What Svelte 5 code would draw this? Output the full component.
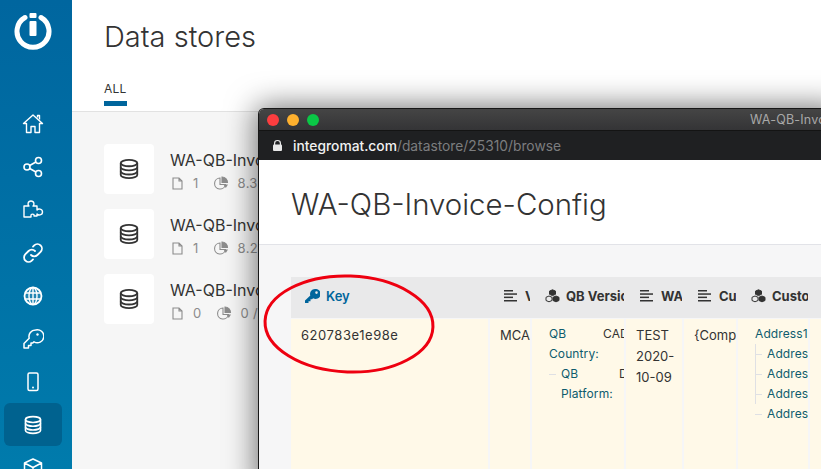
<script>
  const stores = [
    { name: 'WA-QB-Invoice-Config', records: 1, size: '8.3 KB / 1 MB' },
    { name: 'WA-QB-Invoice-Log', records: 1, size: '8.2 KB / 1 MB' },
    { name: 'WA-QB-Invoice-Test', records: 0, size: '0 / 1 MB' },
  ];

  const columns = [
    { label: 'V', icon: 'text' },
    { label: 'QB Version', icon: 'group' },
    { label: 'WA', icon: 'text' },
    { label: 'Cu', icon: 'text' },
    { label: 'Custom', icon: 'group' },
  ];

  const addressLines = ['Address2:', 'Address3:', 'Address4:', 'Address5:'];
</script>

{#snippet dbIcon(size)}
  <svg width={size} height={size} viewBox="0 0 24 24" fill="none" stroke="currentColor" stroke-width="2">
    <ellipse cx="12" cy="5.5" rx="9" ry="3.5" />
    <path d="M3 5.500v13c0 1.900 4 3.500 9 3.500s9-1.600 9-3.500v-13" />
    <path d="M3 10c0 1.900 4 3.500 9 3.500s9-1.600 9-3.500" />
    <path d="M3 14.500c0 1.900 4 3.500 9 3.500s9-1.600 9-3.500" />
  </svg>
{/snippet}

{#snippet fileIcon()}
  <svg width="11" height="13" viewBox="0 0 11 13" fill="none" stroke="#8c8c8c" stroke-width="1.100">
    <path d="M1 1h6l3 3v8H1zM7 1v3h3" />
  </svg>
{/snippet}

{#snippet pieIcon()}
  <svg width="15" height="14" viewBox="0 0 15 14" fill="none" stroke="#8c8c8c" stroke-width="1.100">
    <path d="M6 2a5.500 5.500 0 1 0 5.500 6.500H6z" />
    <path d="M8 1a5.500 5.500 0 0 1 5.500 5.500H8z" fill="#8c8c8c" />
    <path d="M9.500 8.500h4.500l-2.200 3.500z" fill="#8c8c8c" stroke="none" />
  </svg>
{/snippet}

{#snippet textIcon()}
  <svg class="col-icon" width="13" height="12" viewBox="0 0 13 12" fill="#333">
    <rect width="9" height="1.500" y="0" />
    <rect width="13" height="1.500" y="3.300" />
    <rect width="9" height="1.500" y="6.600" />
    <rect width="13" height="1.500" y="10" />
  </svg>
{/snippet}

{#snippet groupIcon()}
  <svg class="col-icon cubes" width="15" height="14" viewBox="0 0 15 14" fill="#333" stroke="#333" stroke-width="1">
    <path d="M7.500 0.800l3 1.300v3.200l-3 1.300-3-1.300V2.100z" />
    <path d="M4 7l3 1.300v3.200L4 12.800 1 11.500V8.300z" fill="#e9e9ea" />
    <path d="M11 7l3 1.300v3.200L11 12.800 8 11.500V8.300z" />
  </svg>
{/snippet}

<div class="page">
  <nav class="sidebar">
    <svg class="logo" width="38" height="38" viewBox="0 0 38 38" fill="none">
      <path d="M11 5.500a16 16 0 1 0 16 0" stroke="#fff" stroke-width="5" stroke-linecap="round" />
      <rect x="15.500" y="1" width="7" height="5" rx="1" fill="#fff" />
      <rect x="15.500" y="9" width="7" height="15" rx="1" fill="#fff" />
    </svg>

    <ul class="menu">
      <li>
        <svg width="22" height="22" viewBox="0 0 22 22" fill="none" stroke="#fff" stroke-width="1.400" stroke-linejoin="round">
          <path d="M1.500 10.500L11 2l9.500 8.500h-3v9h-4.500v-6H9v6H4.500v-9z" />
          <path d="M15.500 4.500v-2h2v4" />
        </svg>
      </li>
      <li>
        <svg width="22" height="22" viewBox="0 0 22 22" fill="none" stroke="#fff" stroke-width="1.600">
          <circle cx="5" cy="11" r="3" />
          <circle cx="16.500" cy="4.500" r="3" />
          <circle cx="16.500" cy="17.500" r="3" />
          <path d="M7.700 9.500l6.200-3.500M7.700 12.500l6.200 3.500" />
        </svg>
      </li>
      <li>
        <svg width="22" height="22" viewBox="0 0 22 22" fill="none" stroke="#fff" stroke-width="1.400" stroke-linejoin="round">
          <path d="M2 7h5c-1.500-1-1.500-5 2-5s3.500 4 2 5h4v4c1-1.500 5.500-1.500 5.500 2s-4.500 3.500-5.500 2v2h-3c.8-2.500-3.500-2.500-3 0v1H2z" />
        </svg>
      </li>
      <li>
        <svg width="22" height="22" viewBox="0 0 22 22" fill="none" stroke="#fff" stroke-width="1.800" stroke-linecap="round">
          <path d="M9 13a4.500 4.500 0 0 0 6.400 0l3.200-3.200a4.500 4.500 0 0 0-6.400-6.400L11 4.600" />
          <path d="M13 9a4.500 4.500 0 0 0-6.400 0l-3.200 3.200a4.500 4.500 0 0 0 6.400 6.400l1.200-1.200" />
        </svg>
      </li>
      <li>
        <svg width="22" height="22" viewBox="0 0 22 22" fill="none" stroke="#fff" stroke-width="1.400">
          <circle cx="11" cy="11" r="8.500" fill="#ffffff22" stroke-width="1.800" />
          <ellipse cx="11" cy="11" rx="4" ry="8.500" />
          <path d="M3 8h16M3 14h16M11 2.500v17" />
        </svg>
      </li>
      <li>
        <svg width="22" height="22" viewBox="0 0 22 22" fill="none" stroke="#fff" stroke-width="1.500" stroke-linejoin="round">
          <path d="M13.500 2a6.500 6.500 0 0 0-6.300 8.200L2 15.500V20h4.500v-2.500H9v-2.500h1.800l1.200-1.200A6.500 6.500 0 1 0 13.500 2z" />
          <circle cx="15.500" cy="6.500" r="1.200" fill="#fff" stroke="none" />
        </svg>
      </li>
      <li>
        <svg width="22" height="22" viewBox="0 0 22 22" fill="none" stroke="#fff" stroke-width="1.500">
          <rect x="6" y="2" width="10" height="17.500" rx="1.500" />
          <circle cx="11" cy="16.500" r="1" fill="#fff" stroke="none" />
        </svg>
      </li>
      <li class="active">{@render dbIcon(20)}</li>
      <li>
        <svg width="22" height="22" viewBox="0 0 22 22" fill="none" stroke="#fff" stroke-width="1.500" stroke-linejoin="round">
          <path d="M11 2l8.500 4v10L11 20.500 2.500 16V6zM2.500 6L11 10.500 19.500 6M11 10.500v10" />
        </svg>
      </li>
    </ul>
  </nav>

  <main class="main">
    <header class="head">
      <h1>Data stores</h1>
      <div class="tab">ALL</div>
    </header>

    <div class="list">
      {#each stores as store}
        <div class="store">
          <div class="tile">{@render dbIcon(22)}</div>
          <div class="info">
            <div class="name">{store.name}</div>
            <div class="meta">
              {@render fileIcon()}
              <span class="count">{store.records}</span>
              {@render pieIcon()}
              <span class="size">{store.size}</span>
            </div>
          </div>
        </div>
      {/each}
    </div>
  </main>

  <section class="window">
    <div class="titlebar">
      <i class="light red"></i>
      <i class="light yellow"></i>
      <i class="light green"></i>
      <span class="win-title">WA-QB-Invoice-Config</span>
    </div>
    <div class="urlbar">
      <svg width="9" height="11" viewBox="0 0 9 11" fill="#e8e8e8">
        <path d="M1 5V3.300a3.500 3.300 0 0 1 7 0V5h-1.200V3.300a2.300 2.200 0 0 0-4.600 0V5z" />
        <rect y="4.500" width="9" height="6.500" rx="1" />
      </svg>
      <span class="url"><b>integromat.com</b>/datastore/25310/browse</span>
    </div>

    <div class="doc-title">
      <h2>WA-QB-Invoice-Config</h2>
    </div>

    <div class="doc-body">
      <div class="table">
        <div class="th key-head">
          <svg class="col-icon" width="15" height="14" viewBox="0 0 15 14" fill="#00659c">
            <path d="M10 0a5 5 0 0 0-4.700 6.600L0 11.500V14h3.500v-1.700h2v-2h1.600l1-1A5 5 0 1 0 10 0zm1.500 2.300a1.300 1.300 0 1 1 0 2.600 1.300 1.300 0 0 1 0-2.600z" />
          </svg>
          Key
        </div>
        {#each columns as col}
          <div class="th">
            {#if col.icon === 'text'}
              {@render textIcon()}
            {:else}
              {@render groupIcon()}
            {/if}
            <span class="th-label">{col.label}</span>
          </div>
        {/each}
        <div class="th"></div>

        <div class="td key-cell">620783e1e98e</div>
        <div class="td plain">MCA</div>
        <div class="td nested">
          <div class="pair">
            <span class="field">QB Country:</span><span class="val">CAD</span>
          </div>
          <div class="pair sub">
            <span class="dash"></span><span class="field">QB Platform:</span><span class="val">D</span>
          </div>
        </div>
        <div class="td plain wrap">TEST 2020-10-09</div>
        <div class="td plain">{'{Comp'}</div>
        <div class="td nested">
          <div class="field line">Address1:</div>
          <div class="tree">
            {#each addressLines as line}
              <div class="leaf"><span class="dash"></span><span class="field">{line}</span></div>
            {/each}
          </div>
        </div>
        <div class="td"></div>
      </div>
    </div>
  </section>

  <svg class="circle" width="190" height="110" viewBox="0 0 190 110" fill="none">
    <ellipse cx="95" cy="54" rx="84" ry="48" stroke="#ee0010" stroke-width="3" transform="rotate(2 95 54)" />
  </svg>
</div>

<style>
  :global(body) {
    margin: 0;
    overflow: hidden;
  }
  .page {
    position: relative;
    display: flex;
    width: 821px;
    height: 469px;
    overflow: hidden;
    font-family: Inter, "Liberation Sans", sans-serif;
    color: #333;
    background: #f6f6f6;
  }
  .sidebar {
    flex: 0 0 66px;
    padding-right: 6px;
    background: linear-gradient(180deg, #00669f, #007bac);
    display: flex;
    flex-direction: column;
    align-items: center;
    color: #fff;
  }
  .logo {
    margin-top: 12px;
    flex-shrink: 0;
  }
  .menu {
    list-style: none;
    margin: 52px 0 0;
    padding: 0;
    display: flex;
    flex-direction: column;
    align-items: center;
  }
  .menu li {
    width: 58px;
    height: 43px;
    display: flex;
    align-items: center;
    justify-content: center;
    border-radius: 6px;
    flex-shrink: 0;
  }
  .menu li.active {
    background: #00628f;
  }
  .main {
    flex: 1;
    min-width: 0;
  }
  .head {
    height: 111px;
    background: #fff;
    border-bottom: 1px solid #e2e2e2;
    padding-left: 32px;
    display: flex;
    flex-direction: column;
  }
  h1 {
    margin: 18px 0 0;
    font-size: 29px;
    line-height: 38px;
    font-weight: 300;
  }
  .tab {
    margin-top: 25px;
    width: 23px;
    height: 25px;
    font-size: 12px;
    line-height: 16px;
    letter-spacing: 0.2px;
    border-bottom: 5px solid #00659c;
    box-sizing: border-box;
  }
  .list {
    padding: 32px 0 0 32px;
    display: flex;
    flex-direction: column;
    gap: 15px;
  }
  .store {
    display: flex;
    gap: 16px;
  }
  .tile {
    width: 50px;
    height: 50px;
    background: #fff;
    border-radius: 4px;
    display: flex;
    align-items: center;
    justify-content: center;
    color: #333;
  }
  .info {
    padding-top: 6px;
    white-space: nowrap;
  }
  .name {
    font-size: 16px;
    line-height: 20px;
  }
  .meta {
    margin: 5px 0 0 2px;
    display: flex;
    align-items: center;
    font-size: 13px;
    line-height: 16px;
    letter-spacing: 0.3px;
    color: #8c8c8c;
  }
  .count {
    margin: 0 15px 0 10px;
  }
  .size {
    margin-left: 9px;
  }
  .window {
    position: absolute;
    left: 259px;
    top: 109px;
    width: 580px;
    height: 380px;
    background: #f6f6f7;
    border-radius: 5px 0 0 0;
    box-shadow: 0 0 30px 3px rgba(0, 0, 0, 0.55), 0 0 0 1px #222;
    overflow: hidden;
  }
  .titlebar {
    height: 21px;
    background: linear-gradient(180deg, #454545, #343436);
    border-bottom: 1px solid #141414;
    display: flex;
    align-items: center;
    padding-left: 8px;
    gap: 8px;
  }
  .light {
    flex: 0 0 12px;
    height: 12px;
    border-radius: 50%;
  }
  .red {
    background: #fc3d3f;
  }
  .yellow {
    background: #feb02e;
  }
  .green {
    background: #0ac746;
  }
  .win-title {
    margin-left: 423px;
    font-size: 12.500px;
    color: #a8a8a8;
    white-space: nowrap;
    letter-spacing: 0.2px;
  }
  .urlbar {
    height: 29px;
    background: #1f2022;
    display: flex;
    align-items: center;
    padding-left: 14px;
    gap: 11px;
    font-size: 13.800px;
    color: #7c7d7f;
    white-space: nowrap;
  }
  .url b {
    font-weight: 500;
    color: #f2f2f2;
  }
  .doc-title {
    height: 84px;
    background: #fff;
    border-bottom: 1px solid #e2e3e8;
    padding-left: 32px;
  }
  h2 {
    margin: 0;
    padding-top: 26px;
    font-size: 29.400px;
    line-height: 38px;
    font-weight: 300;
  }
  .doc-body {
    padding: 32px 0 0 32px;
  }
  .table {
    display: grid;
    grid-template-columns: 197px 40px 92px 56px 52px 70px 40px;
    column-gap: 2px;
    grid-template-rows: 41px 200px;
    width: 560px;
    background: #f6f6f7;
  }
  .th {
    background: #e9e9ea;
    margin-right: -2px;
    display: flex;
    align-items: center;
    padding: 0 2px 3px 14px;
    gap: 8px;
    font-size: 13px;
    font-weight: 700;
    white-space: nowrap;
    overflow: hidden;
    color: #333;
  }
  .th-label {
    min-width: 0;
    overflow: hidden;
  }
  .cubes {
    margin: 0 -2px 0 -1px;
  }
  .key-head {
    padding-left: 14px;
    color: #00659c;
    font-weight: 600;
    gap: 6px;
  }
  .col-icon {
    flex-shrink: 0;
  }
  .td {
    background: #fff9e8;
    margin-top: 1px;
    font-size: 13px;
    line-height: 21px;
    overflow: hidden;
  }
  .key-cell {
    padding: 6px 0 0 10px;
    letter-spacing: 0.55px;
  }
  .plain {
    padding: 6px 0 0 10px;
    white-space: nowrap;
  }
  .wrap {
    white-space: normal;
  }
  .nested {
    font-size: 12px;
    line-height: 20px;
    padding-top: 5px;
    letter-spacing: 0.1px;
  }
  .field {
    color: #0e5c6e;
  }
  .pair {
    display: grid;
    grid-template-columns: 54px auto;
    padding-left: 17px;
    white-space: nowrap;
  }
  .pair .field {
    white-space: normal;
  }
  .pair.sub {
    grid-template-columns: 12px 58px auto;
    width: 100px;
  }
  .dash {
    width: 7px;
    height: 1px;
    background: #dfe0e4;
    margin: 10px 5px 0 0;
    display: inline-block;
    vertical-align: top;
  }
  .line {
    padding-left: 17px;
    white-space: nowrap;
  }
  .tree {
    margin-left: 17px;
    white-space: nowrap;
    position: relative;
  }
  .tree::before {
    content: "";
    position: absolute;
    left: 0;
    top: 0;
    height: 60px;
    width: 1px;
    background: #dfe0e4;
  }
  .circle {
    position: absolute;
    left: 254px;
    top: 270px;
  }
</style>
